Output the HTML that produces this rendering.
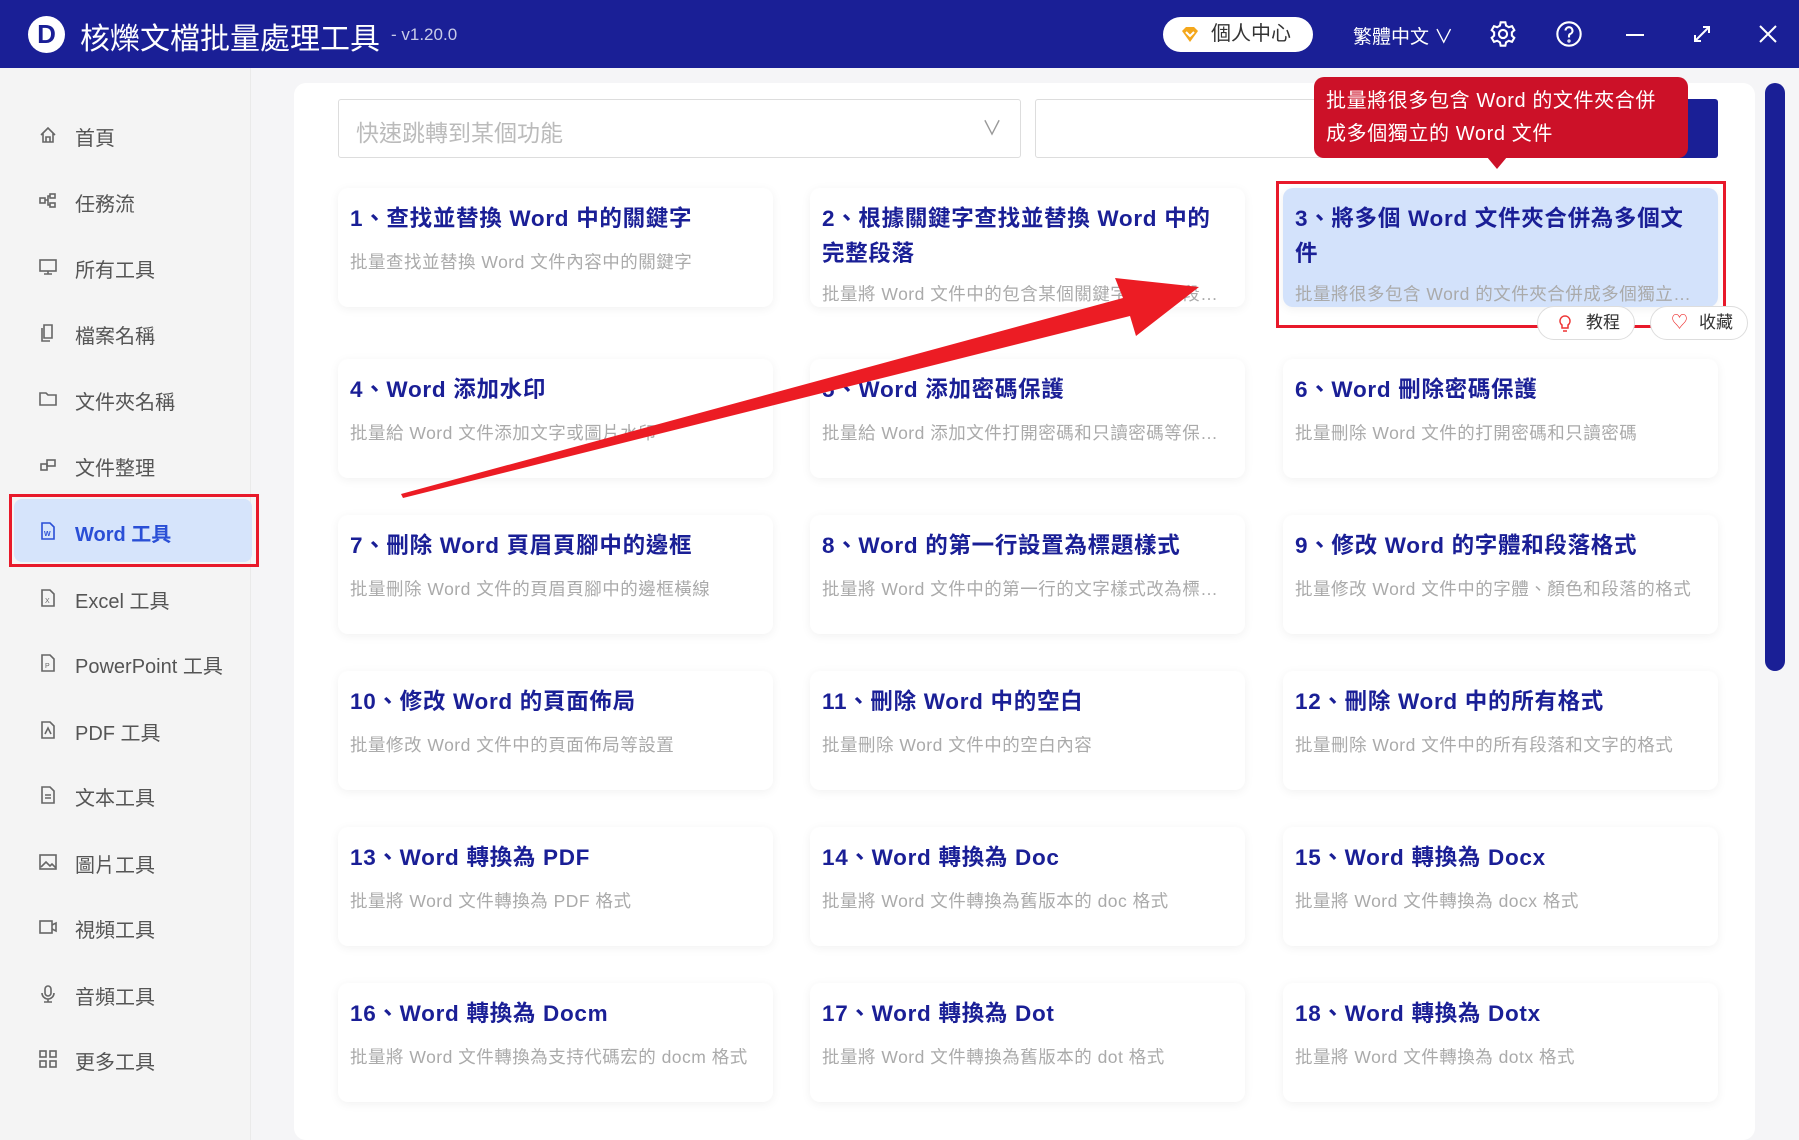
<!DOCTYPE html>
<html><head><meta charset="utf-8">
<style>
*{margin:0;padding:0;box-sizing:border-box}
body{width:1799px;height:1140px;overflow:hidden;background:#f5f5f7;font-family:"Liberation Sans","Noto Sans CJK TC",sans-serif;position:relative}
.hdr{position:absolute;left:0;top:0;width:1799px;height:68px;background:#1a1f96;color:#fff}
.logo{position:absolute;left:28px;top:16px;width:37px;height:37px;border-radius:50%;background:#fff;color:#1a1f96;font-weight:bold;font-size:26px;text-align:center;line-height:37px}
.title{position:absolute;left:80px;top:14px;font-size:30px}
.ver{position:absolute;left:391px;top:25px;font-size:17px;color:#c8cbe8}
.pill{position:absolute;left:1163px;top:17px;width:150px;height:35px;border-radius:18px;background:#fff;color:#333;font-size:20px;line-height:35px;padding-left:48px}
.lang{position:absolute;left:1353px;top:22px;font-size:19px}
.side{position:absolute;left:0;top:68px;width:250px;height:1072px;background:#f4f4f4}
.item{position:absolute;left:75px;font-size:20px;color:#555}
.ic{position:absolute;left:-36px;top:4px;width:18px;height:18px}
.act{position:absolute;left:14px;top:499px;width:238px;height:63px;background:#d6e4fb;border-radius:8px}
.actb{position:absolute;left:9px;top:494px;width:250px;height:73px;border:3px solid #e8192a}
.main{position:absolute;left:294px;top:83px;width:1461px;height:1057px;background:#fff;border-radius:12px}
.sel{position:absolute;left:338px;top:99px;width:683px;height:59px;border:1px solid #ddd;border-radius:3px;font-size:23px;color:#bbb;padding:14px 17px}
.inp{position:absolute;left:1035px;top:99px;width:660px;height:59px;border:1px solid #ddd;border-radius:3px}
.btn{position:absolute;left:1675px;top:99px;width:43px;height:59px;background:#1a1f96;border-radius:0 3px 3px 0}
.card{position:absolute;width:435px;height:119px;background:#fff;border-radius:10px;box-shadow:0 2px 10px rgba(0,0,0,.06);padding:13px 22px 13px 12px}
.card h3{font-size:22.5px;color:#1a1f96;font-weight:bold;line-height:35px;letter-spacing:0.7px}
.card p{font-size:17.5px;color:#aaa;margin-top:13px;white-space:nowrap;overflow:hidden;letter-spacing:0.5px;text-overflow:ellipsis}
.sb{position:absolute;left:1765px;top:83px;width:20px;height:588px;background:#1a1f96;border-radius:10px}
.tip{position:absolute;left:1314px;top:77px;width:374px;height:81px;background:#cc1128;border-radius:10px;color:#fff;font-size:20px;line-height:33px;padding:8px 12px;letter-spacing:0.6px}
.pb{position:absolute;top:306px;height:34px;width:98px;border:1px solid #ddd;border-radius:17px;background:#fff;font-size:17px;color:#333;line-height:32px;padding-left:48px}
</style></head><body>
<div class="hdr">
<div class="logo">D</div>
<div class="title">核爍文檔批量處理工具</div>
<div class="ver">- v1.20.0</div>
<div class="pill"><svg style="position:absolute;left:18px;top:9px" width="18" height="17" viewBox="0 0 18 17"><path d="M1 5L5 1H13L17 5L9 16Z" fill="#f4a71c"/><path d="M5 6L9 10L13 6" stroke="#fff" stroke-width="2" fill="none"/></svg>個人中心</div>
<div class="lang">繁體中文 ∨</div>
<svg style="position:absolute;left:1489px;top:20px" width="28" height="28" viewBox="0 0 24 24" fill="none" stroke="#fff" stroke-width="1.8"><circle cx="12" cy="12" r="3.5"/><path d="M10 2h4l.6 2.8 2.4 1.4 2.7-.9 2 3.4-2.1 1.9v2.8l2.1 1.9-2 3.4-2.7-.9-2.4 1.4L14 22h-4l-.6-2.8-2.4-1.4-2.7.9-2-3.4 2.1-1.9V10.6L2.3 8.7l2-3.4 2.7.9 2.4-1.4Z"/></svg>
<svg style="position:absolute;left:1555px;top:20px" width="28" height="28" viewBox="0 0 24 24" fill="none" stroke="#fff" stroke-width="1.8"><circle cx="12" cy="12" r="10"/><path d="M9 9a3 3 0 1 1 4 3c-1 .5-1 1-1 3"/><circle cx="12" cy="18" r=".5"/></svg>
<div style="position:absolute;left:1626px;top:34px;width:18px;height:2px;background:#fff"></div>
<svg style="position:absolute;left:1692px;top:24px" width="20" height="20" viewBox="0 0 20 20" stroke="#fff" stroke-width="2" fill="none"><path d="M3 17L17 3M11 3h6v6M3 11v6h6"/></svg>
<svg style="position:absolute;left:1758px;top:24px" width="20" height="20" viewBox="0 0 20 20" stroke="#fff" stroke-width="2"><path d="M2 2L18 18M18 2L2 18"/></svg>
</div>
<div class="side">
<div style="position:absolute;left:250px;top:0;width:1px;height:1072px;background:#eaeaea"></div>
</div>
<div class="act"></div><div class="actb"></div>
<div class="item" style="top:122px"><svg class="ic" viewBox="0 0 18 18" fill="none" stroke="#666" stroke-width="1.6"><path d="M2 9L9 2L16 9M4 7V16H14V7M7 16V11H11V16"/></svg>首頁</div>
<div class="item" style="top:188px"><svg class="ic" viewBox="0 0 18 18" fill="none" stroke="#666" stroke-width="1.6"><rect x="1" y="6" width="5" height="5"/><rect x="11" y="2" width="5" height="4"/><rect x="11" y="11" width="5" height="4"/><path d="M6 8H9V4H11M9 8V13H11"/></svg>任務流</div>
<div class="item" style="top:254px"><svg class="ic" viewBox="0 0 18 18" fill="none" stroke="#666" stroke-width="1.6"><rect x="1" y="2" width="16" height="11"/><path d="M9 13V16M5 16H13"/></svg>所有工具</div>
<div class="item" style="top:320px"><svg class="ic" viewBox="0 0 18 18" fill="none" stroke="#666" stroke-width="1.6"><path d="M5 1H13V14H5Z M3 4V17H11"/></svg>檔案名稱</div>
<div class="item" style="top:386px"><svg class="ic" viewBox="0 0 18 18" fill="none" stroke="#666" stroke-width="1.6"><path d="M1 3H7L9 5H17V15H1Z"/></svg>文件夾名稱</div>
<div class="item" style="top:452px"><svg class="ic" viewBox="0 0 18 18" fill="none" stroke="#666" stroke-width="1.6"><rect x="2" y="8" width="6" height="6"/><rect x="8" y="4" width="8" height="6"/></svg>文件整理</div>
<div class="item" style="top:518px;color:#2a4fd6;font-weight:bold"><svg class="ic" viewBox="0 0 18 18" fill="none" stroke="#2a4fd6" stroke-width="1.6"><path d="M3 1H11L15 5V17H3Z"/><text x="5" y="14" font-size="7" fill="#2a4fd6" stroke="none">W</text></svg>Word 工具</div>
<div class="item" style="top:585px"><svg class="ic" viewBox="0 0 18 18" fill="none" stroke="#666" stroke-width="1.6"><path d="M3 1H11L15 5V17H3Z"/><text x="6" y="14" font-size="7" fill="#666" stroke="none">X</text></svg>Excel 工具</div>
<div class="item" style="top:650px"><svg class="ic" viewBox="0 0 18 18" fill="none" stroke="#666" stroke-width="1.6"><path d="M3 1H11L15 5V17H3Z"/><text x="6" y="14" font-size="7" fill="#666" stroke="none">P</text></svg>PowerPoint 工具</div>
<div class="item" style="top:717px"><svg class="ic" viewBox="0 0 18 18" fill="none" stroke="#666" stroke-width="1.6"><path d="M3 1H11L15 5V17H3Z M6 13L9 7L12 13"/></svg>PDF 工具</div>
<div class="item" style="top:782px"><svg class="ic" viewBox="0 0 18 18" fill="none" stroke="#666" stroke-width="1.6"><path d="M3 1H11L15 5V17H3Z M6 9H12M6 12H12"/></svg>文本工具</div>
<div class="item" style="top:849px"><svg class="ic" viewBox="0 0 18 18" fill="none" stroke="#666" stroke-width="1.6"><rect x="1" y="2" width="16" height="14"/><path d="M2 14L7 9L11 13L13 11L17 15"/></svg>圖片工具</div>
<div class="item" style="top:914px"><svg class="ic" viewBox="0 0 18 18" fill="none" stroke="#666" stroke-width="1.6"><rect x="1" y="3" width="12" height="12"/><path d="M13 7L17 5V13L13 11"/></svg>視頻工具</div>
<div class="item" style="top:981px"><svg class="ic" viewBox="0 0 18 18" fill="none" stroke="#666" stroke-width="1.6"><rect x="6" y="1" width="6" height="10" rx="3"/><path d="M3 8A6 6 0 0 0 15 8M9 14V17M5 17H13"/></svg>音頻工具</div>
<div class="item" style="top:1046px"><svg class="ic" viewBox="0 0 18 18" fill="none" stroke="#666" stroke-width="1.6"><rect x="1" y="1" width="6" height="6"/><rect x="11" y="1" width="6" height="6"/><rect x="1" y="11" width="6" height="6"/><rect x="11" y="11" width="6" height="6"/></svg>更多工具</div>

<div class="main"></div>
<div class="sel">快速跳轉到某個功能<span style="position:absolute;right:18px;top:12px;color:#999;font-size:20px">∨</span></div>
<div class="inp"></div><div class="btn"></div>
<div class="sb"></div>

<div class="card" style="left:338px;top:188px"><h3>1、查找並替換 Word 中的關鍵字</h3><p>批量查找並替換 Word 文件內容中的關鍵字</p></div>
<div class="card" style="left:810px;top:188px"><h3>2、根據關鍵字查找並替換 Word 中的完整段落</h3><p style="margin-top:10px">批量將 Word 文件中的包含某個關鍵字的某個段落...</p></div>
<div class="card" style="left:1283px;top:188px;background:#d3e2fb"><h3>3、將多個 Word 文件夾合併為多個文件</h3><p style="margin-top:10px">批量將很多包含 Word 的文件夾合併成多個獨立的...</p></div>
<div style="position:absolute;left:1276px;top:181px;width:450px;height:147px;border:3px solid #e8192a"></div>
<div class="pb" style="left:1537px">教程<svg style="position:absolute;left:20px;top:8px" width="14" height="18" viewBox="0 0 14 18" fill="none" stroke="#e33" stroke-width="1.5"><path d="M7 1A5 5 0 0 0 4 10V13H10V10A5 5 0 0 0 7 1ZM5 16H9"/></svg></div>
<div class="pb" style="left:1650px">收藏<span style="position:absolute;left:20px;top:0;color:#e33">♡</span></div>

<div class="card" style="left:338px;top:359px"><h3>4、Word 添加水印</h3><p>批量給 Word 文件添加文字或圖片水印</p></div>
<div class="card" style="left:810px;top:359px"><h3>5、Word 添加密碼保護</h3><p>批量給 Word 添加文件打開密碼和只讀密碼等保護...</p></div>
<div class="card" style="left:1283px;top:359px"><h3>6、Word 刪除密碼保護</h3><p>批量刪除 Word 文件的打開密碼和只讀密碼</p></div>
<div class="card" style="left:338px;top:515px"><h3>7、刪除 Word 頁眉頁腳中的邊框</h3><p>批量刪除 Word 文件的頁眉頁腳中的邊框橫線</p></div>
<div class="card" style="left:810px;top:515px"><h3>8、Word 的第一行設置為標題樣式</h3><p>批量將 Word 文件中的第一行的文字樣式改為標題...</p></div>
<div class="card" style="left:1283px;top:515px"><h3>9、修改 Word 的字體和段落格式</h3><p>批量修改 Word 文件中的字體、顏色和段落的格式</p></div>
<div class="card" style="left:338px;top:671px"><h3>10、修改 Word 的頁面佈局</h3><p>批量修改 Word 文件中的頁面佈局等設置</p></div>
<div class="card" style="left:810px;top:671px"><h3>11、刪除 Word 中的空白</h3><p>批量刪除 Word 文件中的空白內容</p></div>
<div class="card" style="left:1283px;top:671px"><h3>12、刪除 Word 中的所有格式</h3><p>批量刪除 Word 文件中的所有段落和文字的格式</p></div>
<div class="card" style="left:338px;top:827px"><h3>13、Word 轉換為 PDF</h3><p>批量將 Word 文件轉換為 PDF 格式</p></div>
<div class="card" style="left:810px;top:827px"><h3>14、Word 轉換為 Doc</h3><p>批量將 Word 文件轉換為舊版本的 doc 格式</p></div>
<div class="card" style="left:1283px;top:827px"><h3>15、Word 轉換為 Docx</h3><p>批量將 Word 文件轉換為 docx 格式</p></div>
<div class="card" style="left:338px;top:983px"><h3>16、Word 轉換為 Docm</h3><p>批量將 Word 文件轉換為支持代碼宏的 docm 格式</p></div>
<div class="card" style="left:810px;top:983px"><h3>17、Word 轉換為 Dot</h3><p>批量將 Word 文件轉換為舊版本的 dot 格式</p></div>
<div class="card" style="left:1283px;top:983px"><h3>18、Word 轉換為 Dotx</h3><p>批量將 Word 文件轉換為 dotx 格式</p></div>

<div class="tip">批量將很多包含 Word 的文件夾合併<br>成多個獨立的 Word 文件</div>
<div style="position:absolute;left:1487px;top:157px;width:0;height:0;border-left:10px solid transparent;border-right:10px solid transparent;border-top:12px solid #cc1128"></div>

<svg style="position:absolute;left:0;top:0" width="1799" height="1140"><polygon points="401,494 403,498 1130,316 1136,336 1199,287 1115,278 1123,298" fill="#ec1c24"/></svg>
</body></html>
